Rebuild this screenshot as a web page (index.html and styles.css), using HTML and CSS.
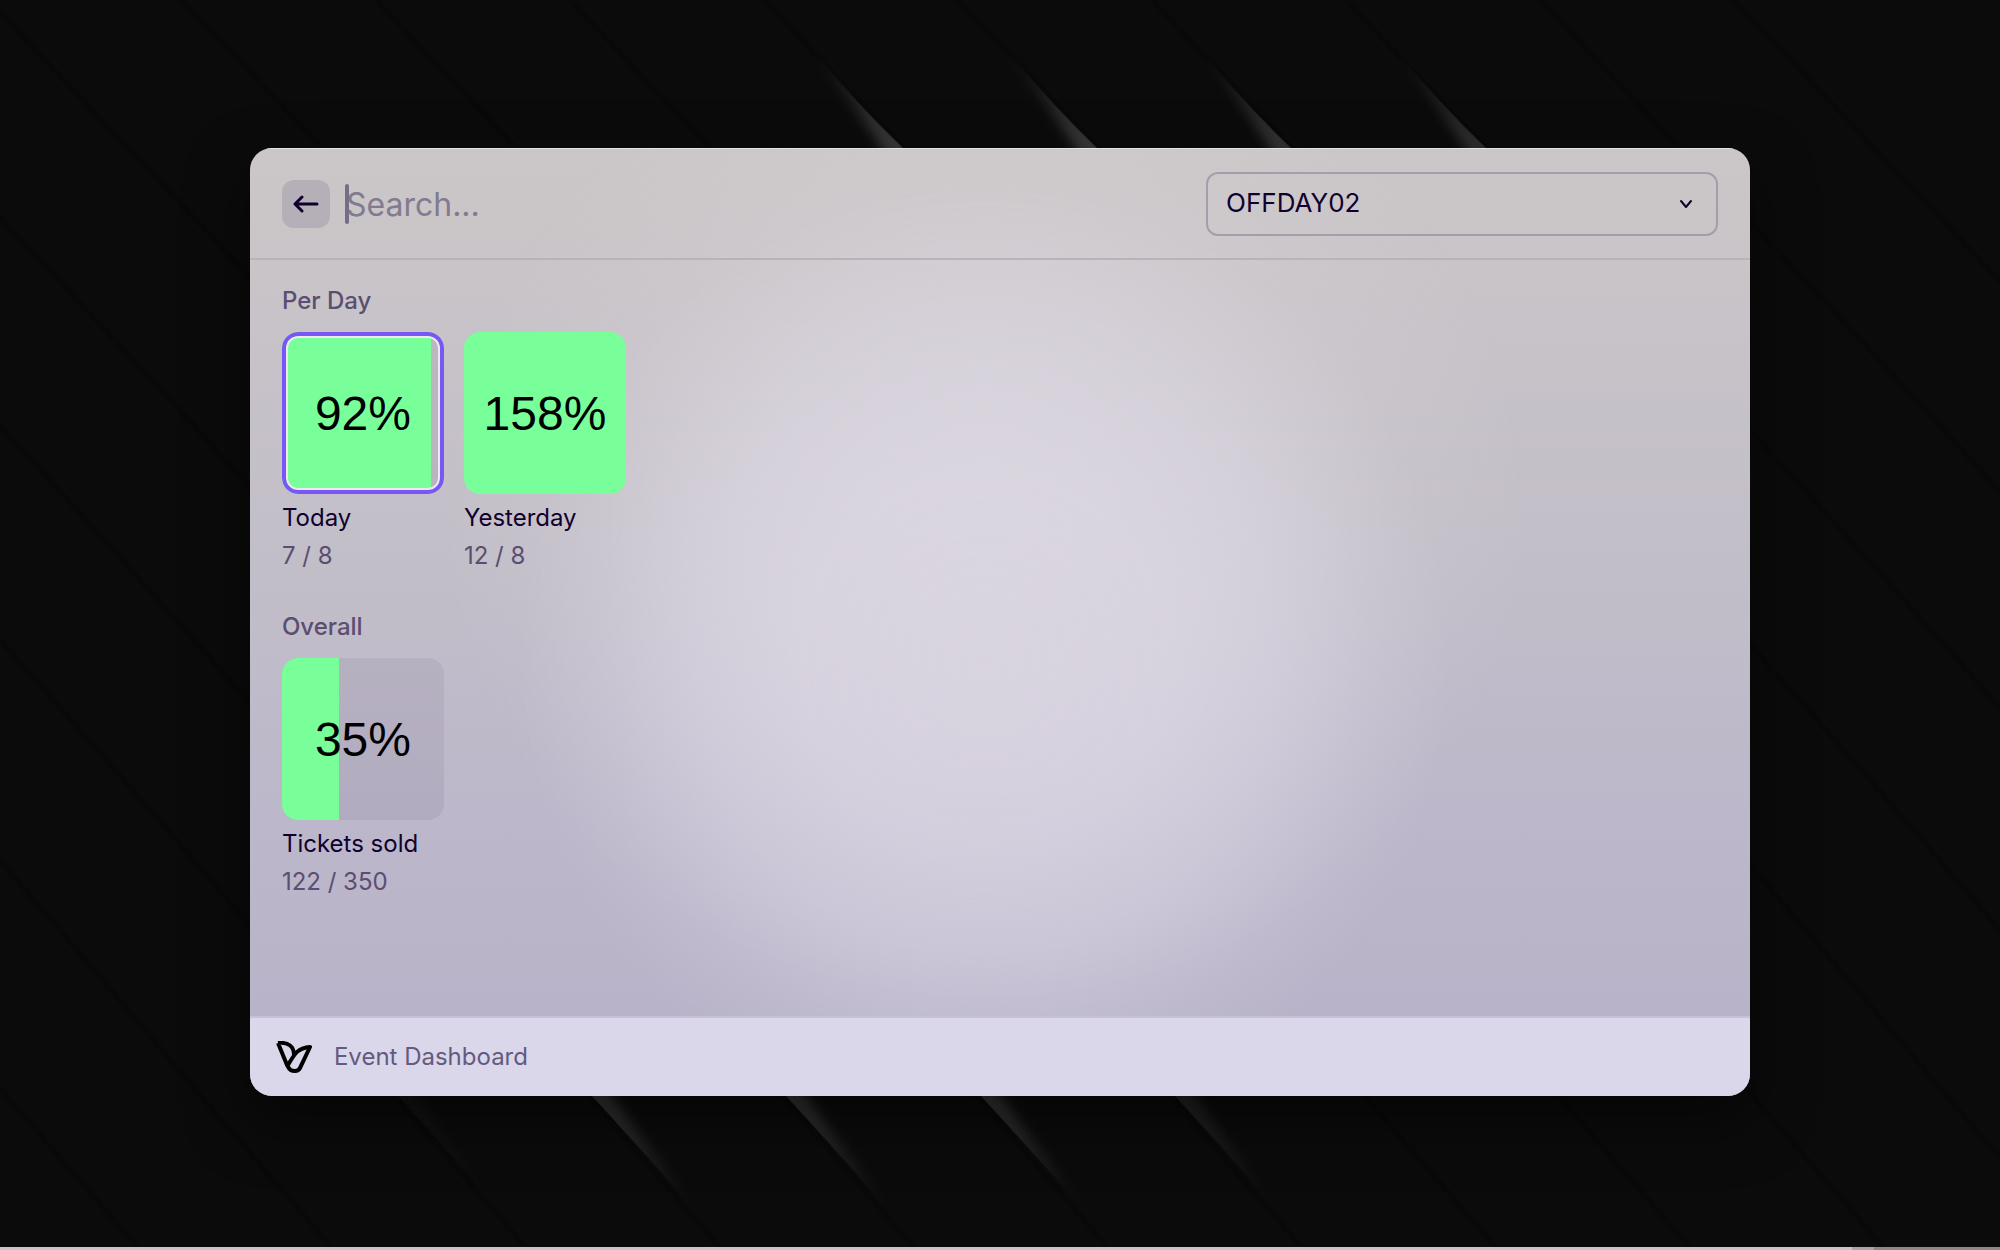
FILE: index.html
```html
<!DOCTYPE html>
<html lang="en">
<head>
<meta charset="utf-8">
<meta name="viewport" content="width=device-width, initial-scale=1">
<title>Event Dashboard</title>
<link rel="stylesheet" href="styles.css">
</head>
<body>
<svg class="wallpaper" viewBox="0 0 2000 1250" preserveAspectRatio="xMidYMid slice" aria-hidden="true">
  <defs>
    <linearGradient id="fadeUp" gradientUnits="userSpaceOnUse" x1="0" y1="-100" x2="0" y2="0">
      <stop offset="0" stop-color="#fff" stop-opacity="0"/>
      <stop offset="1" stop-color="#fff" stop-opacity=".2"/>
    </linearGradient>
    <linearGradient id="fadeDown" gradientUnits="userSpaceOnUse" x1="0" y1="0" x2="0" y2="110">
      <stop offset="0" stop-color="#fff" stop-opacity=".17"/>
      <stop offset="1" stop-color="#fff" stop-opacity="0"/>
    </linearGradient>
    <filter id="soft" x="-50%" y="-50%" width="200%" height="200%"><feGaussianBlur stdDeviation="6"/></filter>
    <clipPath id="topClip"><path d="M-100 -110L-90 -98Q-50 -48 0 0H-160V-110Z"/></clipPath>
    <clipPath id="lowClip"><path d="M0 0Q50 54 108 120H200V0Z"/></clipPath>
    <g id="topRay" clip-path="url(#topClip)"><path fill="url(#fadeUp)" filter="url(#soft)" d="M-90 -98L-70 -98Q-36 -52 34 20L-8 20Q-46 -38 -90 -98Z"/></g>
    <g id="lowRay" clip-path="url(#lowClip)"><path fill="url(#fadeDown)" filter="url(#soft)" d="M108 120L92 120Q34 60 -34 -20L6 -20Q46 36 108 120Z"/></g>
    <path id="crease" fill="none" stroke="#090909" stroke-width="5" d="M0 0L140 148Q590 620 992 1100L1122 1250"/>
  </defs>
  <use href="#crease" x="-982"/><use href="#crease" x="-788"/><use href="#crease" x="-594"/><use href="#crease" x="-400"/>
  <use href="#crease" x="-206"/><use href="#crease" x="-12"/><use href="#crease" x="182"/><use href="#crease" x="376"/>
  <use href="#crease" x="570"/><use href="#crease" x="764"/><use href="#crease" x="958"/><use href="#crease" x="1152"/>
  <use href="#crease" x="1346"/><use href="#crease" x="1540"/><use href="#crease" x="1734"/>
  <use href="#topRay" x="904" y="149"/><use href="#topRay" x="1098" y="149"/>
  <use href="#topRay" x="1292" y="149" opacity=".9"/><use href="#topRay" x="1487" y="149" opacity=".8"/>
  <use href="#lowRay" x="397" y="1095" opacity=".2"/><use href="#lowRay" x="591" y="1095"/><use href="#lowRay" x="785" y="1095"/>
  <use href="#lowRay" x="980" y="1095"/><use href="#lowRay" x="1174" y="1095" opacity=".6"/>
</svg>
<main class="stage">
  <section class="panel" aria-label="Event Dashboard">
    <header class="toolbar">
      <button class="back" type="button" aria-label="Back">
        <svg width="26" height="18" viewBox="0 0 26 18"><path d="M24 9H2M9 2L2 9L9 16"/></svg>
      </button>
      <div class="search">
        <input class="search-input" type="text" placeholder="Search..." aria-label="Search">
        <span class="caret"></span>
      </div>
      <div class="picker">
        <select class="picker-select" aria-label="Event"><option>OFFDAY02</option></select>
        <svg class="picker-arrow" width="14" height="10" viewBox="0 0 14 10"><path d="M2 2L7 8L12 2"/></svg>
      </div>
    </header>
    <div class="content">
      <section class="group">
        <h2 class="group-title">Per Day</h2>
        <div class="cards">
          <article class="card">
            <div class="tile selected"><div class="fill" style="width:92%"></div><span class="value">92%</span></div>
            <h3 class="name">Today</h3>
            <p class="detail">7 / 8</p>
          </article>
          <article class="card">
            <div class="tile"><div class="fill" style="width:100%"></div><span class="value">158%</span></div>
            <h3 class="name">Yesterday</h3>
            <p class="detail">12 / 8</p>
          </article>
        </div>
      </section>
      <section class="group">
        <h2 class="group-title">Overall</h2>
        <div class="cards">
          <article class="card">
            <div class="tile"><div class="fill" style="width:35%"></div><span class="value">35%</span></div>
            <h3 class="name">Tickets sold</h3>
            <p class="detail">122 / 350</p>
          </article>
        </div>
      </section>
    </div>
    <footer class="status">
      <svg class="logo" width="36" height="32" viewBox="0 0 36 32"><path d="M2 2C12 1 18 5 18 14M2 2L11 24C14 30 16 30 19 30C22 30 23 29 24 27L34 6C22 7 19 12 12 24"/></svg>
      <span>Event Dashboard</span>
    </footer>
  </section>
</main>
<div class="edge"><div class="edge-light"></div><div class="edge-mid"></div><div class="edge-dark"></div></div>
</body>
</html>
```
FILE: styles.css
```css
* { box-sizing: border-box; }

body {
  margin: 0;
  min-height: 100vh;
  display: flex;
  flex-direction: column;
  position: relative;
  background: #0b0b0b;
  color: #11002e;
  font-family: Inter, "Liberation Sans", sans-serif;
  font-size: 24px;
  line-height: 38px;
}

h2, h3, p { margin: 0; font: inherit; }

.wallpaper {
  position: absolute;
  inset: 0;
  width: 100%;
  height: 100%;
}

.stage {
  flex: 1;
  position: relative;
  display: flex;
  align-items: flex-start;
  justify-content: center;
  padding: 148px 24px 24px;
}

.panel {
  width: 76.85%;
  min-height: 948px;
  display: flex;
  flex-direction: column;
  overflow: hidden;
  border-radius: 22px;
  background:
    radial-gradient(ellipse 31% 50% at 49% 54%, rgba(226, 222, 234, .56) 0%, rgba(226, 222, 234, .52) 40%, rgba(224, 220, 234, .4) 62%, rgba(224, 220, 234, .14) 84%, rgba(224, 220, 234, 0) 100%),
    radial-gradient(ellipse 36% 52% at 49% 38%, rgba(220, 214, 220, .56) 0%, rgba(220, 214, 220, .42) 45%, rgba(220, 214, 220, .16) 75%, rgba(220, 214, 220, 0) 100%),
    linear-gradient(#cbc7c7 0%, #c8c3c8 18%, #c2bec8 45%, #bcb7ca 70%, #b8b3c8 92%);
  box-shadow: 0 24px 60px rgba(0, 0, 0, .5);
}

.toolbar {
  display: flex;
  align-items: center;
  height: 112px;
  padding: 0 32px;
  gap: 16px;
  border-top: 1px solid #e6e3e4;
  border-bottom: 2px solid #b8b3bb;
}

.back {
  display: grid;
  place-items: center;
  width: 48px;
  height: 48px;
  padding: 0;
  border: 0;
  border-radius: 12px;
  background: rgba(60, 45, 85, .14);
}

.back svg, .picker-arrow {
  fill: none;
  stroke: #11002e;
  stroke-width: 3;
  stroke-linecap: round;
  stroke-linejoin: round;
}

.search {
  flex: 1;
  position: relative;
}

.search-input {
  display: block;
  width: 100%;
  height: 48px;
  padding: 2px 0 0;
  border: 0;
  outline: 0;
  background: none;
  color: #11002e;
  font: inherit;
  font-size: 32px;
}

.search-input::placeholder { color: #827a90; opacity: 1; }

.caret {
  position: absolute;
  left: -1px;
  top: 4px;
  width: 4px;
  height: 40px;
  border-radius: 2px;
  background: #776d88;
}

.picker {
  position: relative;
  width: 512px;
}

.picker-select {
  appearance: none;
  display: block;
  width: 100%;
  height: 64px;
  padding: 0 18px 2px;
  border: 2px solid #a49eab;
  border-radius: 12px;
  background: none;
  color: inherit;
  font: inherit;
  font-size: 26px;
}

.picker-arrow {
  position: absolute;
  right: 25px;
  top: 27px;
  stroke-width: 2;
}

.content {
  flex: 1;
  display: flex;
  flex-direction: column;
  gap: 33px;
  padding: 22px 32px;
}

.group-title {
  margin-bottom: 12px;
  color: #5a4e71;
  font-weight: 500;
}

.cards { display: flex; gap: 20px; }

.card { width: 162px; }

.tile {
  position: relative;
  display: grid;
  place-items: center;
  height: 162px;
  margin-bottom: 5px;
  border-radius: 16px;
  overflow: hidden;
  background: rgba(60, 45, 85, .08);
}

.tile > * { grid-area: 1 / 1; }

.fill {
  justify-self: start;
  height: 100%;
  background: #78ff9a;
}

.value {
  padding-top: 2px;
  color: #000;
  font-family: "Liberation Sans", Arial, sans-serif;
  font-size: 48px;
  line-height: 60px;
}

.selected::after {
  content: "";
  position: absolute;
  inset: 0;
  border: 4px solid #7857f5;
  border-radius: 16px;
  box-shadow: inset 0 0 0 2px #eceaf0;
}

.detail { color: #5a4e71; }

.status {
  display: flex;
  align-items: center;
  gap: 22px;
  height: 80px;
  padding: 0 26px;
  border-top: 2px solid #c6c1d6;
  background: #dad7ea;
  color: #645a80;
}

.logo {
  fill: none;
  stroke: #000;
  stroke-width: 4;
  stroke-linejoin: round;
}

.edge {
  position: relative;
  display: flex;
  height: 3px;
}

.edge-light { flex: 1; background: #cbc5c7; }
.edge-mid { width: 22px; background: #aaa5a8; }
.edge-dark { width: 126px; background: #8f8889; }
```
